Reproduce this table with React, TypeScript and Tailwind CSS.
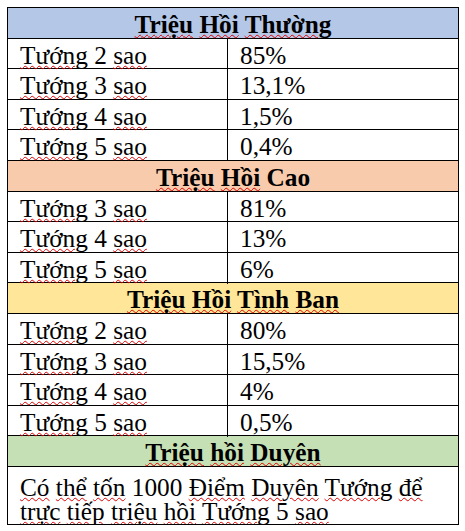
import { Fragment } from "react";

const plain = new Set(["2", "3", "4", "5", "1000", "Cao"]);

function Checked({ text }: { text: string }) {
  const words = text.split(" ");
  return (
    <>
      {words.map((w, i) => (
        <Fragment key={i}>
          {i > 0 && " "}
          {plain.has(w) ? (
            w
          ) : (
            <span className="underline decoration-wavy decoration-[#e00000] decoration-1 underline-offset-[1px]">
              {w}
            </span>
          )}
        </Fragment>
      ))}
    </>
  );
}

const sections = [
  {
    title: "Triệu Hồi Thường",
    bg: "bg-[#b4c7e7]",
    rows: [
      ["Tướng 2 sao", "85%"],
      ["Tướng 3 sao", "13,1%"],
      ["Tướng 4 sao", "1,5%"],
      ["Tướng 5 sao", "0,4%"],
    ],
  },
  {
    title: "Triệu Hồi Cao",
    bg: "bg-[#f8cbad]",
    rows: [
      ["Tướng 3 sao", "81%"],
      ["Tướng 4 sao", "13%"],
      ["Tướng 5 sao", "6%"],
    ],
  },
  {
    title: "Triệu Hồi Tình Ban",
    bg: "bg-[#ffe699]",
    rows: [
      ["Tướng 2 sao", "80%"],
      ["Tướng 3 sao", "15,5%"],
      ["Tướng 4 sao", "4%"],
      ["Tướng 5 sao", "0,5%"],
    ],
  },
];

export default function App() {
  return (
    <div className="min-h-[531px] w-[465px] bg-white pl-[7px] pt-[7px] font-['Liberation_Serif',serif] text-[25.3px] text-black">
      <div className="w-[452px] border border-black">
        {sections.map((s) => (
          <Fragment key={s.title}>
            <div
              className={`h-[30.6px] border-b border-black pt-[1px] text-center font-bold leading-[30px] ${s.bg}`}
            >
              <Checked text={s.title} />
            </div>
            {s.rows.map(([name, pct]) => (
              <div
                key={name}
                className="grid h-[30.6px] grid-cols-[220px_1fr] border-b border-black pt-[1px] leading-[30px]"
              >
                <div className="-mt-[1px] border-r border-black pl-[12px] pt-[1px]">
                  <Checked text={name} />
                </div>
                <div className="pl-[12px]">{pct}</div>
              </div>
            ))}
          </Fragment>
        ))}
        <div className="h-[30.6px] border-b border-black bg-[#c5e0b4] pt-[1px] text-center font-bold leading-[30px]">
          <Checked text="Triệu hồi Duyên" />
        </div>
        <div className="h-[57px] overflow-hidden pl-[12px] pt-[8px] leading-[24.5px]">
          <Checked text="Có thể tốn 1000 Điểm Duyên Tướng để" />
          <br />
          <Checked text="trực tiếp triệu hồi Tướng 5 sao" />
        </div>
      </div>
    </div>
  );
}
